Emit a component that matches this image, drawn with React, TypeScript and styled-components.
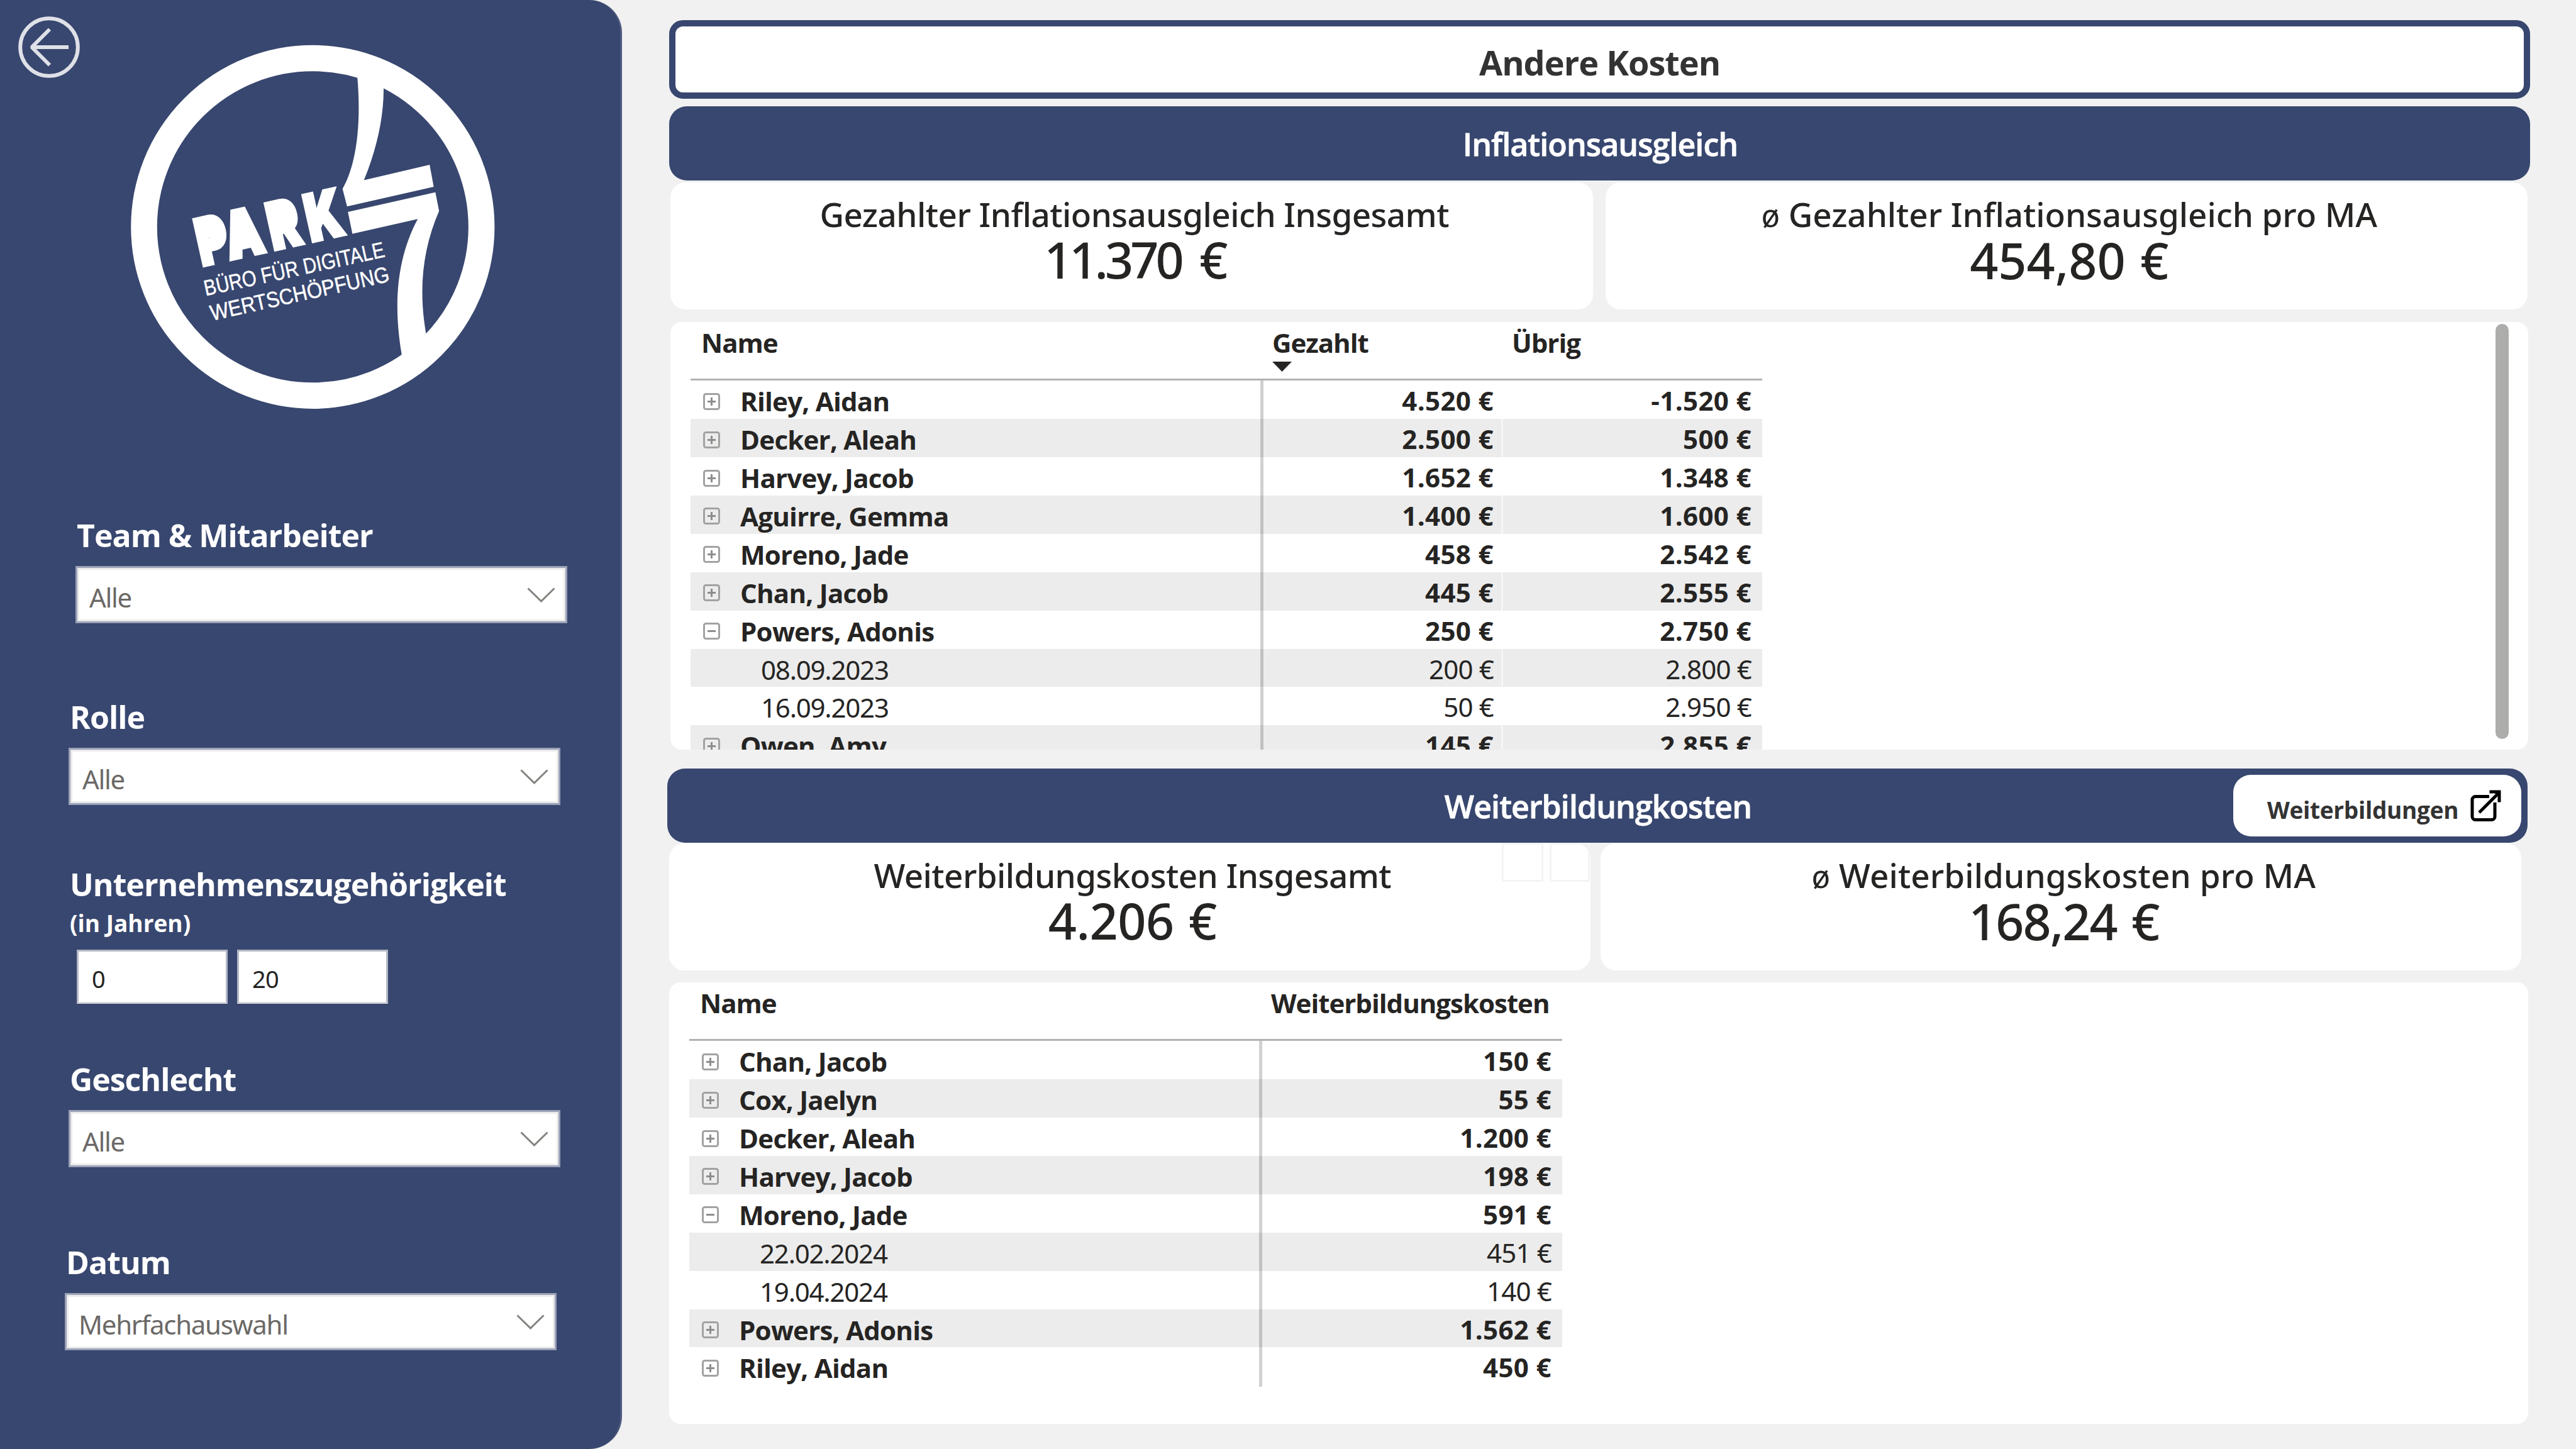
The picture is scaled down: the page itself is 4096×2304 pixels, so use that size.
import React from 'react';
import styled, { createGlobalStyle } from 'styled-components';

const NAVY = '#38476f';

const GlobalStyle = createGlobalStyle`
  *, *::before, *::after { box-sizing: border-box; }
  body {
    margin: 0;
    background: #f1f1f1;
    font-family: 'Open Sans', 'Noto Sans', sans-serif;
    color: #252423;
  }
`;

const Page = styled.div`
  display: flex;
  width: 4096px;
  height: 2304px;
  overflow: hidden;
  background: #f1f1f1;
`;

/* ---------- sidebar ---------- */

const Sidebar = styled.aside`
  display: flex;
  flex-direction: column;
  flex: none;
  width: 989px;
  height: 2304px;
  background: ${NAVY};
  border-right: 3px solid #4d5a7f;
  border-radius: 0 52px 52px 0;
`;

const SidebarHead = styled.header`
  display: flex;
  align-items: flex-start;
  gap: 81px;
  height: 821px;
  padding: 26px 0 0 29px;
`;

const BackButton = styled.button`
  width: 98px;
  height: 98px;
  padding: 0;
  border: 0;
  background: none;
`;

const LogoBox = styled.div`
  width: 580px;
  height: 580px;
  margin-top: 45px;
`;

const Filter = styled.section<{ $left: number; $after: number }>`
  display: flex;
  flex-direction: column;
  margin-left: ${(p) => p.$left}px;
  margin-bottom: ${(p) => p.$after}px;
`;

const FilterLabel = styled.h3`
  margin: 0;
  padding-left: 2px;
  font-size: 50px;
  line-height: 60px;
  font-weight: 700;
  letter-spacing: -1px;
  color: #fff;
  white-space: nowrap;
`;

const FilterHint = styled.span`
  margin-top: 10px;
  padding-left: 2px;
  font-size: 37px;
  line-height: 44px;
  font-weight: 700;
  color: #fff;
`;

const Dropdown = styled.div`
  display: flex;
  align-items: center;
  justify-content: space-between;
  width: 782px;
  height: 91px;
  margin-top: 19px;
  padding: 0 16px 0 19px;
  background: #fff;
  border: 3px solid #9ba2b8;
  box-shadow: inset 0 0 0 3px #ebebeb;
`;

const DropdownText = styled.span`
  padding-top: 9px;
  font-family: 'Noto Sans', sans-serif;
  font-size: 42px;
  line-height: 60px;
  font-weight: 400;
  letter-spacing: -1.3px;
  color: #6b6967;
`;

const Inputs = styled.div`
  display: flex;
  gap: 15px;
  margin: 20px 0 0 13px;
`;

const NumberBox = styled.div`
  width: 240px;
  height: 86px;
  padding: 13px 0 0 21px;
  border: 3px solid #b4b8c6;
  border-bottom-color: #d9dae0;
  background: #fff;
  font-family: 'Noto Sans', sans-serif;
  font-size: 38px;
  line-height: 60px;
  font-weight: 400;
  letter-spacing: -0.8px;
`;

/* ---------- main area ---------- */

const Main = styled.main`
  display: flex;
  flex-direction: column;
  width: 2962px;
  margin-left: 72px;
  padding-top: 32px;
`;

const Title = styled.h1`
  display: flex;
  align-items: center;
  justify-content: center;
  flex: none;
  width: 2959px;
  height: 125px;
  margin: 0 0 12px 3px;
  padding-top: 8px;
  border: 10px solid ${NAVY};
  border-radius: 22px;
  background: #fff;
  font-size: 54px;
  line-height: 70px;
  font-weight: 700;
  letter-spacing: -1px;
  color: #333;
`;

const Band = styled.header<{ $left: number; $width: number; $after: number }>`
  display: grid;
  grid-template-columns: 1fr auto 1fr;
  align-items: center;
  flex: none;
  width: ${(p) => p.$width}px;
  height: 118px;
  margin: 0 0 ${(p) => p.$after}px ${(p) => p.$left}px;
  border-radius: 28px;
  background: ${NAVY};
`;

const BandTitle = styled.h2`
  grid-column: 2;
  margin: 0;
  padding: 2px 0 0 2px;
  font-size: 50px;
  line-height: 70px;
  font-weight: 600;
  letter-spacing: -0.9px;
  -webkit-text-stroke: 0.8px #fff;
  color: #fff;
`;

const LinkButton = styled.button`
  display: flex;
  align-items: center;
  justify-self: end;
  gap: 19px;
  width: 458px;
  height: 98px;
  margin-right: 10px;
  padding: 0 0 0 54px;
  border: 0;
  border-radius: 28px;
  background: #fff;
  font-family: inherit;
  font-size: 37px;
  font-weight: 700;
  letter-spacing: -0.3px;
  color: #333;
`;

const LinkText = styled.span`
  padding-top: 12px;
`;

const Cards = styled.div<{ $left: number; $width: number; $gap: number; $after: number }>`
  display: grid;
  grid-template-columns: 1fr 1fr;
  flex: none;
  gap: ${(p) => p.$gap}px;
  width: ${(p) => p.$width}px;
  height: 202px;
  margin: 0 0 ${(p) => p.$after}px ${(p) => p.$left}px;
`;

const Card = styled.article`
  position: relative;
  display: flex;
  flex-direction: column;
  align-items: center;
  padding: 21px 0 0 9px;
  border-radius: 24px;
  background: #fff;
  font-family: 'Noto Sans', sans-serif;
  font-weight: 500;
  white-space: nowrap;
`;

const CardLabel = styled.span<{ $track: number }>`
  font-size: 53px;
  line-height: 60px;
  letter-spacing: ${(p) => p.$track}px;
`;

const Average = styled.span`
  font-size: 49px;
  font-weight: 400;
`;

const CardValue = styled.span<{ $track: number; $space?: number }>`
  font-size: 79px;
  line-height: 84px;
  letter-spacing: ${(p) => p.$track}px;
  word-spacing: ${(p) => p.$space ?? 0}px;
`;

const GhostBox = styled.i<{ $left: number; $width: number }>`
  position: absolute;
  top: -1px;
  left: ${(p) => p.$left}px;
  width: ${(p) => p.$width}px;
  height: 62px;
  border: 3px solid #f4f4f4;
`;

const Panel = styled.section<{ $left: number; $width: number; $height: number; $after: number }>`
  display: flex;
  justify-content: space-between;
  flex: none;
  width: ${(p) => p.$width}px;
  height: ${(p) => p.$height}px;
  margin: 0 0 ${(p) => p.$after}px ${(p) => p.$left}px;
  padding-left: 32px;
  border-radius: 18px;
  background: #fff;
  overflow: hidden;
`;

const ScrollThumb = styled.div`
  width: 21px;
  height: 660px;
  margin: 3px 31px 0 0;
  border-radius: 11px;
  background: #adadab;
`;

/* ---------- matrix ---------- */

const Matrix = styled.div<{ $columns: string }>`
  display: grid;
  grid-template-columns: ${(p) => p.$columns};
  grid-template-rows: 93.3px;
  grid-auto-rows: 60.9px;
  align-content: start;
  font-size: 42px;
  line-height: 60px;
`;

const HeadRow = styled.div`
  display: grid;
  grid-column: 1 / -1;
  grid-template-columns: subgrid;
`;

const HeadCell = styled.div<{ $first?: boolean }>`
  padding: 3px 0 0 ${(p) => (p.$first ? 17 : 14)}px;
  border-bottom: 3px solid #b3b1af;
  font-weight: 700;
  letter-spacing: -1px;
`;

const BodyRow = styled.div<{ $striped: boolean; $bold: boolean }>`
  display: grid;
  grid-column: 1 / -1;
  grid-template-columns: subgrid;
  background: ${(p) => (p.$striped ? '#ececec' : '#fff')};
  font-family: ${(p) => (p.$bold ? "'Open Sans'" : "'Noto Sans'")}, sans-serif;
  font-weight: ${(p) => (p.$bold ? 700 : 400)};
`;

const NameCell = styled.div<{ $child: boolean }>`
  display: flex;
  align-items: center;
  gap: 32px;
  padding: 3px 0 0 ${(p) => (p.$child ? 112 : 20)}px;
  border-right: 5px solid rgba(0, 0, 0, 0.18);
  letter-spacing: ${(p) => (p.$child ? -1.2 : -0.75)}px;
`;

const ValueCell = styled.div<{ $bold: boolean; $edge: boolean }>`
  padding: 2px ${(p) => (p.$edge ? 17 : 12)}px 0 0;
  border-right: ${(p) => (p.$edge ? 0 : 3)}px solid rgba(255, 255, 255, 0.5);
  text-align: right;
  letter-spacing: ${(p) => (p.$bold ? 0.4 : -0.8)}px;
`;

const SortArrow = styled.svg`
  display: block;
`;

/* ---------- drawings ---------- */

const Chevron = () => (
  <svg width="45" height="24" viewBox="0 0 45 24" fill="none">
    <path d="M1.5 1.5 L22.5 22 L43.5 1.5" stroke="#84837f" strokeWidth="3" />
  </svg>
);

const BackIcon = () => (
  <svg width="98" height="98" viewBox="0 0 98 98" fill="none" stroke="#dfe1e8" strokeWidth="6">
    <circle cx="49" cy="49" r="45.8" />
    <path d="M80 49 H22" />
    <path d="M50 20.5 L21.5 49 L50 77.5" strokeLinejoin="bevel" />
  </svg>
);

const ExternalIcon = () => (
  <svg width="50" height="52" viewBox="0 0 50 52" fill="none" stroke="#000" strokeWidth="5">
    <path d="M30 11.5 H8 a5 5 0 0 0 -5 5 V43.500 a5 5 0 0 0 5 5 H34 a5 5 0 0 0 5 -5 V21" />
    <path d="M14 37 L44 7" />
    <path d="M30.500 1.500 H48.500 V20.500 H43.500 V11 L39 6.500 H30.500 Z" fill="#000" stroke="none" />
  </svg>
);

const Expander = ({ open }: { open: boolean }) => (
  <svg width="27" height="27" viewBox="0 0 27 27" fill="none" strokeWidth="3">
    <rect x="1.5" y="1.5" width="24" height="24" rx="3" stroke="#a3a2a1" />
    <path d={open ? 'M7 13.5 H20' : 'M7 13.5 H20 M13.5 7 V20'} stroke="#8e8d8c" />
  </svg>
);

const Logo = () => (
  <svg width="580" height="580" viewBox="208 71 580 580" fill="#fff">
    <circle cx="497.3" cy="360.8" r="268.3" fill="none" stroke="#fff" strokeWidth="41.6" />
    <g transform="scale(0.6531 0.4535)">
      <path d="M870 270 C878 400 874 560 834 662 L845 724 L1056 655 L1046 578 L886 632 C915 530 934 420 934 312 L934 250 L870 225 Z" />
      <path d="M847 743 L1060 674 L1069 740 C1030 870 1018 1010 1037 1168 L1037 1240 L978 1290 L978 1243 C956 1060 968 900 1017 768 L858 820 Z" />
    </g>
    <g transform="translate(320 426) rotate(-12.5)">
      <g transform="scale(0.74 1)">
        <text
          x="2 64 159 242"
          y="-3"
          fontFamily="Inter, sans-serif"
          fontWeight="900"
          fontSize="102"
          stroke="#fff"
          strokeWidth="6"
        >
          PARK
        </text>
        <ellipse cx="38" cy="-53" rx="13" ry="11" />
        <path d="M104 -58 L116 -20 H92 Z" />
        <ellipse cx="195" cy="-54" rx="13" ry="11" />
      </g>
    </g>
    <g fontFamily="'Liberation Sans', Arial, sans-serif" fontSize="35" stroke="#fff" strokeWidth="0.5">
      <text transform="translate(327 470.5) rotate(-12.3)" textLength="293" lengthAdjust="spacingAndGlyphs">
        BÜRO FÜR DIGITALE
      </text>
      <text transform="translate(337 510) rotate(-12.5)" textLength="291" lengthAdjust="spacingAndGlyphs">
        WERTSCHÖPFUNG
      </text>
    </g>
  </svg>
);

/* ---------- data ---------- */

type Row = { name: string; values: string[]; child?: boolean; open?: boolean };

const inflation: Row[] = [
  { name: 'Riley, Aidan', values: ['4.520 €', '-1.520 €'] },
  { name: 'Decker, Aleah', values: ['2.500 €', '500 €'] },
  { name: 'Harvey, Jacob', values: ['1.652 €', '1.348 €'] },
  { name: 'Aguirre, Gemma', values: ['1.400 €', '1.600 €'] },
  { name: 'Moreno, Jade', values: ['458 €', '2.542 €'] },
  { name: 'Chan, Jacob', values: ['445 €', '2.555 €'] },
  { name: 'Powers, Adonis', values: ['250 €', '2.750 €'], open: true },
  { name: '08.09.2023', values: ['200 €', '2.800 €'], child: true },
  { name: '16.09.2023', values: ['50 €', '2.950 €'], child: true },
  { name: 'Owen, Amy', values: ['145 €', '2.855 €'] },
];

const training: Row[] = [
  { name: 'Chan, Jacob', values: ['150 €'] },
  { name: 'Cox, Jaelyn', values: ['55 €'] },
  { name: 'Decker, Aleah', values: ['1.200 €'] },
  { name: 'Harvey, Jacob', values: ['198 €'] },
  { name: 'Moreno, Jade', values: ['591 €'], open: true },
  { name: '22.02.2024', values: ['451 €'], child: true },
  { name: '19.04.2024', values: ['140 €'], child: true },
  { name: 'Powers, Adonis', values: ['1.562 €'] },
  { name: 'Riley, Aidan', values: ['450 €'] },
];

type MatrixProps = { columns: string; heads: string[]; sorted?: number; rows: Row[] };

const MatrixTable = ({ columns, heads, sorted, rows }: MatrixProps) => (
  <Matrix $columns={columns}>
    <HeadRow>
      {heads.map((h, i) => (
        <HeadCell key={h} $first={i === 0}>
          {h}
          {sorted === i && (
            <SortArrow width="31" height="16" viewBox="0 0 31 16">
              <path d="M0 0 H31 L15.5 16 Z" fill="#252423" />
            </SortArrow>
          )}
        </HeadCell>
      ))}
    </HeadRow>
    {rows.map((r, i) => (
      <BodyRow key={r.name} $striped={i % 2 === 1} $bold={!r.child}>
        <NameCell $child={!!r.child}>
          {!r.child && <Expander open={!!r.open} />}
          {r.name}
        </NameCell>
        {r.values.map((v, j) => (
          <ValueCell key={j} $bold={!r.child} $edge={j === r.values.length - 1}>
            {v}
          </ValueCell>
        ))}
      </BodyRow>
    ))}
  </Matrix>
);

const Select = ({ label, value, left, after }: { label: string; value: string; left: number; after: number }) => (
  <Filter $left={left} $after={after}>
    <FilterLabel>{label}</FilterLabel>
    <Dropdown>
      <DropdownText>{value}</DropdownText>
      <Chevron />
    </Dropdown>
  </Filter>
);

export default function App() {
  return (
    <Page>
      <GlobalStyle />
      <Sidebar>
        <SidebarHead>
          <BackButton aria-label="Zurück">
            <BackIcon />
          </BackButton>
          <LogoBox>
            <Logo />
          </LogoBox>
        </SidebarHead>
        <Select label="Team & Mitarbeiter" value="Alle" left={120} after={119} />
        <Select label="Rolle" value="Alle" left={109} after={96} />
        <Filter $left={109} $after={90}>
          <FilterLabel>Unternehmenszugehörigkeit</FilterLabel>
          <FilterHint>(in Jahren)</FilterHint>
          <Inputs>
            <NumberBox>0</NumberBox>
            <NumberBox>20</NumberBox>
          </Inputs>
        </Filter>
        <Select label="Geschlecht" value="Alle" left={109} after={121} />
        <Select label="Datum" value="Mehrfachauswahl" left={103} after={0} />
      </Sidebar>
      <Main>
        <Title>Andere Kosten</Title>
        <Band $left={3} $width={2959} $after={3}>
          <BandTitle>Inflationsausgleich</BandTitle>
        </Band>
        <Cards $left={5} $width={2953} $gap={20} $after={20}>
          <Card>
            <CardLabel $track={-0.55}>Gezahlter Inflationsausgleich Insgesamt</CardLabel>
            <CardValue $track={-5} $space={14}>11.370 €</CardValue>
          </Card>
          <Card>
            <CardLabel $track={-0.05}>
              <Average>ø</Average> Gezahlter Inflationsausgleich pro MA
            </CardLabel>
            <CardValue $track={0} $space={3}>454,80 €</CardValue>
          </Card>
        </Cards>
        <Panel $left={5} $width={2954} $height={680} $after={30}>
          <MatrixTable
            columns="911px 381px 412px"
            heads={['Name', 'Gezahlt', 'Übrig']}
            sorted={1}
            rows={inflation}
          />
          <ScrollThumb />
        </Panel>
        <Band $left={0} $width={2958} $after={1}>
          <BandTitle>Weiterbildungkosten</BandTitle>
          <LinkButton>
            <LinkText>Weiterbildungen</LinkText>
            <ExternalIcon />
          </LinkButton>
        </Band>
        <Cards $left={3} $width={2945} $gap={16} $after={19}>
          <Card>
            <CardLabel $track={-0.55}>Weiterbildungskosten Insgesamt</CardLabel>
            <CardValue $track={-0.4} $space={3}>4.206 €</CardValue>
            <GhostBox $left={1324} $width={66} />
            <GhostBox $left={1400} $width={64} />
          </Card>
          <Card>
            <CardLabel $track={0.1}>
              <Average>ø</Average> Weiterbildungskosten pro MA
            </CardLabel>
            <CardValue $track={-2} $space={5}>168,24 €</CardValue>
          </Card>
        </Cards>
        <Panel $left={3} $width={2956} $height={702} $after={0}>
          <MatrixTable columns="911px 477px" heads={['Name', 'Weiterbildungskosten']} rows={training} />
        </Panel>
      </Main>
    </Page>
  );
}
